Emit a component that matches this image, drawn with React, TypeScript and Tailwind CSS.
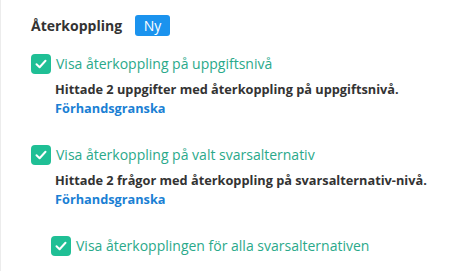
import React from "react";

function Check({ className = "" }: { className?: string }) {
  return (
    <span className={`flex h-5 w-5 shrink-0 items-center justify-center rounded-[4px] bg-[#1fbf95] ${className}`}>
      <svg width="12" height="10" viewBox="0 0 12 10" fill="none">
        <path d="M1.5 5.2 L4.6 8.2 L10.5 1.8" stroke="white" strokeWidth="2" strokeLinecap="round" strokeLinejoin="round" />
      </svg>
    </span>
  );
}

export default function App() {
  return (
    <div className="h-[271px] w-[465px] border-l border-[#ececec] bg-white pl-[30px] pt-[15px] font-['Open_Sans',sans-serif]">
      <div className="flex h-[21px] items-center gap-[13px]">
        <span className="text-[14px] font-bold text-[#333]">Återkoppling</span>
        <span className="flex h-[21px] w-[35px] items-center justify-center rounded-[3px] bg-[#1b93ee] text-[14px] text-white">Ny</span>
      </div>
      <div className="mt-[17px] flex items-center gap-[5px]">
        <Check />
        <span className="text-[14px] text-[#2aa98a]">Visa återkoppling på uppgiftsnivå</span>
      </div>
      <div className="pl-[24px] pt-[6px] leading-[19px]">
        <div className="text-[12.75px] font-bold text-[#333]">Hittade 2 uppgifter med återkoppling på uppgiftsnivå.</div>
        <div className="text-[12.75px] font-bold text-[#1a7fd4]">Förhandsgranska</div>
      </div>
      <div className="mt-[26px] flex items-center gap-[5px]">
        <Check />
        <span className="text-[14px] text-[#2aa98a]">Visa återkoppling på valt svarsalternativ</span>
      </div>
      <div className="pl-[24px] pt-[6px] leading-[19px]">
        <div className="text-[12.75px] font-bold text-[#333]">Hittade 2 frågor med återkoppling på svarsalternativ-nivå.</div>
        <div className="text-[12.75px] font-bold text-[#1a7fd4]">Förhandsgranska</div>
      </div>
      <div className="ml-[20px] mt-[26px] flex items-center gap-[5px]">
        <Check />
        <span className="text-[14px] text-[#2aa98a]">Visa återkopplingen för alla svarsalternativen</span>
      </div>
    </div>
  );
}
